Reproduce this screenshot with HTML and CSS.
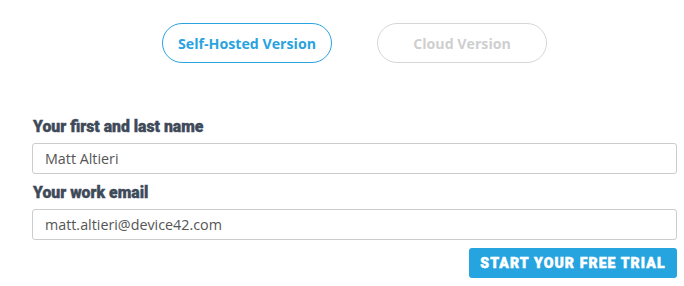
FILE: index.html
```html
<!DOCTYPE html>
<html lang="en">
<head>
    <meta charset="UTF-8">
    <link rel="stylesheet" href="styles.css">
    <title>Trial</title>
</head>
<body>
    <!-- Version switch -->
    <div class="versions">
        <button class="pill active">Self-Hosted Version</button>
        <button class="pill">Cloud Version</button>
    </div>

    <!-- Signup form -->
    <form class="signup">
        <label for="name">Your first and last name</label>
        <input id="name" class="field" type="text" value="Matt Altieri">
        <label for="email">Your work email</label>
        <input id="email" class="field" type="text" value="matt.altieri@device42.com">
        <div class="actions">
            <button type="button" class="trial">Start your free trial</button>
        </div>
    </form>
</body>
</html>
```

FILE: styles.css
```css
/* General Reset */
body {
    margin: 0;
    padding: 0;
    background-color: #fff;
    font-family: 'Open Sans', sans-serif;
}

/* Version switch */
.versions {
    display: flex;
    justify-content: center;
    gap: 45px;
    padding: 23px 0 0 25px;
}

.pill {
    width: 170px;
    height: 40px;
    border: 1px solid #d6d6d6;
    border-radius: 20px;
    background-color: #fff;
    color: #cfcfcf;
    font-family: 'Open Sans', sans-serif;
    font-size: 14.2px;
    font-weight: bold;
    cursor: pointer;
}

.pill.active {
    border-color: #29a3e0;
    color: #29a3e0;
}

/* Form */
.signup {
    display: flex;
    flex-direction: column;
    width: 645px;
    margin: 0;
    padding: 55px 0 0 32px;
}

.signup label {
    font-family: 'Roboto', sans-serif;
    font-size: 15.8px;
    font-weight: 900;
    -webkit-text-stroke: 0.4px #3e4a59;
    color: #3e4a59;
    line-height: 18px;
    margin-bottom: 7px;
    padding-left: 1px;
}

.field {
    height: 31px;
    box-sizing: border-box;
    padding: 0 12px;
    border: 1px solid #cccccc;
    border-radius: 3px;
    font-family: 'Open Sans', sans-serif;
    font-size: 14.3px;
    color: #555;
    margin-bottom: 10px;
}

.actions {
    display: flex;
    justify-content: flex-end;
    margin-top: -2px;
}

.trial {
    width: 208px;
    height: 30px;
    border: none;
    border-radius: 3px;
    background-color: #25a4df;
    color: #fff;
    font-family: 'Roboto', sans-serif;
    font-size: 14px;
    font-weight: 900;
    -webkit-text-stroke: 0.5px #fff;
    letter-spacing: 1.1px;
    text-transform: uppercase;
    cursor: pointer;
}
```
